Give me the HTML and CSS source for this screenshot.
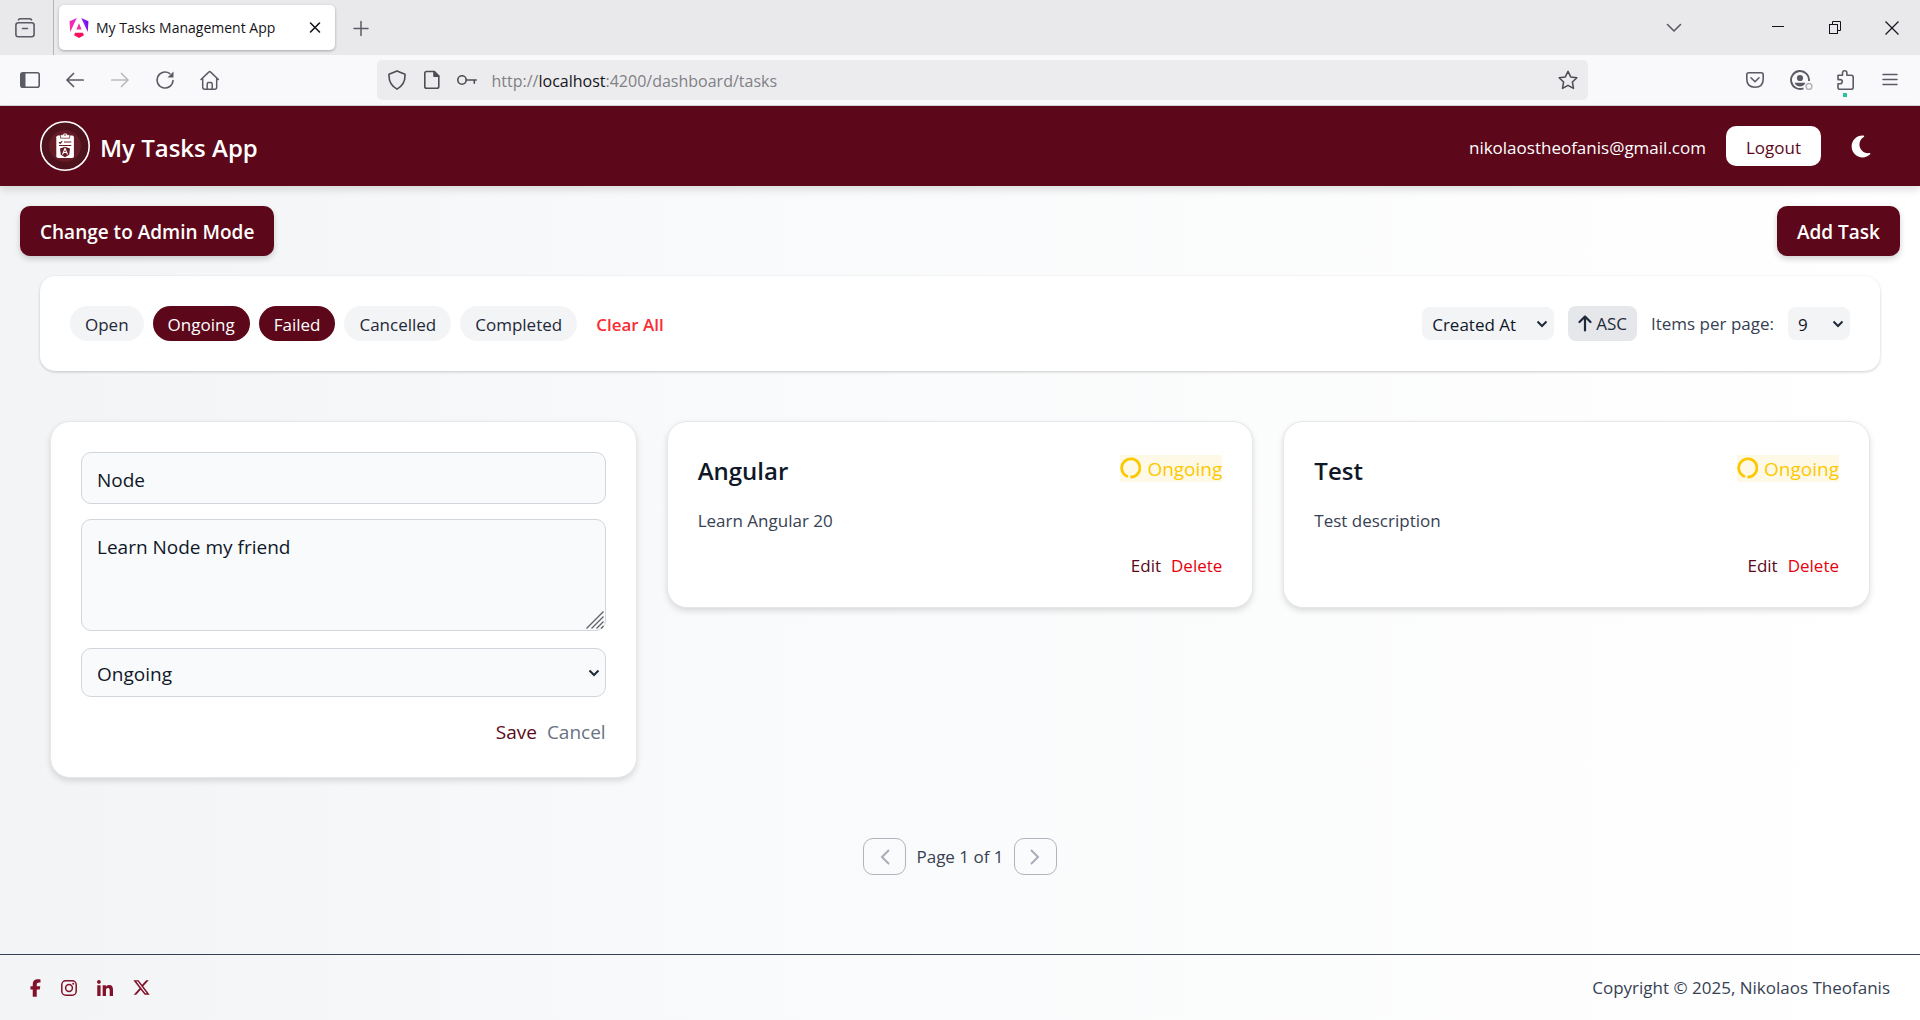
FILE: index.html
```html
<!DOCTYPE html>
<html lang="en">
<head>
<meta charset="utf-8">
<meta name="viewport" content="width=device-width, initial-scale=1">
<title>My Tasks Management App</title>
<link rel="stylesheet" href="styles.css">
</head>
<body>
<div class="browser">
  <div class="tabstrip">
    <button class="icon-btn tabs-menu" aria-label="Recent browsing">
      <svg width="20" height="20" viewBox="0 0 20 20" fill="none" stroke="#5b5b66" stroke-width="1.6" stroke-linecap="round"><path d="M3.5 1.8Q4 .8 5.500.8H14.500Q16 .8 16.500 1.800"/><rect x=".9" y="4.800" width="18.200" height="14" rx="2.500"/><path d="M7.500 10.500h5"/></svg>
    </button>
    <div class="tab">
      <svg width="20" height="20" viewBox="0 0 24 24"><defs><linearGradient id="ng" gradientUnits="userSpaceOnUse" x1="1" y1="14" x2="23" y2="6"><stop offset="0" stop-color="#ff2a90"/><stop offset=".4" stop-color="#e62ad8"/><stop offset="1" stop-color="#6a10f0"/></linearGradient></defs><path fill="url(#ng)" d="M14.692 0l7.832 16.855.814-12.856L14.692 0ZM9.308 0 .662 3.999l.814 12.856L9.308 0Z"/><path fill="#f0309c" d="M8.903 13.930h6.198L12 6.396Z"/><path fill="#f80f5c" d="M16.712 17.711H7.288l-1.204 2.916L12 24l5.916-3.373-1.204-2.916Z"/></svg>
      <span class="tab-title">My Tasks Management App</span>
      <button class="icon-btn" aria-label="Close tab"><svg width="20" height="20" viewBox="0 0 20 20" stroke="#15141a" stroke-width="1.600" stroke-linecap="round"><path d="m5.500 5 9 9m0-9-9 9"/></svg></button>
    </div>
    <button class="icon-btn new-tab" aria-label="New tab"><svg width="20" height="20" viewBox="0 0 20 20" stroke="#5b5b66" stroke-width="1.500" stroke-linecap="round"><path d="M3 10.500h14M10 3.500v14"/></svg></button>
    <div class="window-controls">
      <button class="icon-btn list-tabs" aria-label="List all tabs"><svg width="20" height="20" viewBox="0 0 20 20" fill="none" stroke="#5b5b66" stroke-width="1.600" stroke-linecap="round" stroke-linejoin="round"><path d="m3.500 6.500 6.500 6.500 6.500-6.500"/></svg></button>
      <button class="icon-btn" aria-label="Minimize"><svg width="20" height="20" viewBox="0 0 20 20" stroke="#15141a"><path d="M4 8.500h12"/></svg></button>
      <button class="icon-btn" aria-label="Restore"><svg width="20" height="20" viewBox="0 0 20 20" fill="none" stroke="#15141a"><rect x="4.500" y="6.500" width="8" height="9"/><path d="M7.500 6.500v-3h8v9h-3"/></svg></button>
      <button class="icon-btn" aria-label="Close"><svg width="20" height="20" viewBox="0 0 20 20" stroke="#15141a" stroke-width="1.200"><path d="m3.500 3.500 13 13m0-13-13 13"/></svg></button>
    </div>
  </div>
  <div class="toolbar">
    <button class="icon-btn" aria-label="Sidebar"><svg width="20" height="20" viewBox="0 0 20 20"><rect x=".8" y="2.800" width="18.400" height="14.400" rx="2" fill="none" stroke="#5b5b66" stroke-width="1.600"/><path d="M1 4q0-1 1-1h3.500v14H2q-1 0-1-1z" fill="#5b5b66"/></svg></button>
    <button class="icon-btn" aria-label="Back"><svg width="20" height="20" viewBox="0 0 20 20" fill="none" stroke="#5b5b66" stroke-width="1.700" stroke-linecap="round" stroke-linejoin="round"><path d="M18.200 10H2M8.500 3.500 2 10l6.500 6.500"/></svg></button>
    <button class="icon-btn" aria-label="Forward" disabled><svg width="20" height="20" viewBox="0 0 20 20" fill="none" stroke="#bbbbc0" stroke-width="1.700" stroke-linecap="round" stroke-linejoin="round"><path d="M1.800 10H18M11.500 3.500 18 10l-6.500 6.500"/></svg></button>
    <button class="icon-btn" aria-label="Reload"><svg width="20" height="20" viewBox="0 0 20 20" fill="none" stroke="#5b5b66" stroke-width="1.600" stroke-linecap="round"><path d="M18 10.500A8 8 0 1 1 14.800 3.600"/><path d="M18.500 1.500v6h-6z" fill="#5b5b66" stroke="none"/></svg></button>
    <button class="icon-btn" aria-label="Home"><svg width="20" height="20" viewBox="0 0 20 20" fill="none" stroke="#5b5b66" stroke-width="1.500" stroke-linecap="round" stroke-linejoin="round"><path d="m1 9.500 8-7.600q.700-.700 1.400 0l8 7.600M2.700 8.500v8.700q0 2 2 2h10q2 0 2-2V8.500M7.200 19v-5q0-1.500 1.500-1.500h2q1.500 0 1.500 1.500v5"/></svg></button>
    <span class="spacer"></span>
    <div class="urlbar">
      <svg width="20" height="20" viewBox="0 0 20 20" fill="none" stroke="#4d4d55" stroke-width="1.600" stroke-linejoin="round"><path d="M10 .9 18 4.200q.600 10.300-8 14.900Q1.400 14.500 2 4.200Z"/></svg>
      <svg width="20" height="20" viewBox="0 0 20 20" fill="none" stroke="#4d4d55" stroke-width="1.600" stroke-linejoin="round"><path d="M4 1.500h8.300l4.500 4.500v10.500q0 1.800-1.800 1.800H4.600q-1.800 0-1.800-1.800V3.300q0-1.800 1.800-1.800"/><path d="M12 1.500v4.700h4.800z" fill="#4d4d55"/></svg>
      <svg width="20" height="20" viewBox="0 0 20 20" fill="none" stroke="#4d4d55" stroke-width="1.600" stroke-linecap="round"><circle cx="5" cy="10" r="4.200"/><path d="M9.300 10H19.200M17.300 10v3.300"/></svg>
      <span class="url">http://<b class="host">localhost</b>:4200/dashboard/tasks</span>
      <svg width="20" height="20" viewBox="0 0 20 20" fill="none" stroke="#4d4d55" stroke-width="1.500" stroke-linejoin="round"><path d="m10 1.300 2.700 5.600 6.200.8-4.500 4.300 1.100 6.400L10 15.300l-5.500 3.100L5.600 12 1.100 7.700l6.200-.8Z"/></svg>
    </div>
    <span class="spacer"></span>
    <button class="icon-btn" aria-label="Save to Pocket"><svg width="20" height="20" viewBox="0 0 20 20" fill="none" stroke="#5b5b66" stroke-width="1.600" stroke-linecap="round" stroke-linejoin="round"><path d="M3.800 2.800h12.400q2 0 2 2V9q0 8.200-8.200 8.200T1.800 9V4.800q0-2 2-2Z"/><path d="m6 7.800 4 3.900 4-3.900"/></svg></button>
    <button class="icon-btn" aria-label="Account"><svg class="account" width="24" height="20" viewBox="0 0 24 20" fill="none"><path d="M19 11A9 9 0 1 0 13.500 18.300" stroke="#5b5b66" stroke-width="1.900"/><circle cx="10" cy="8" r="3.100" fill="#5b5b66"/><path d="M4.700 12.800h10.600q-1.300 3.800-5.300 3.800t-5.300-3.800" fill="#5b5b66"/><circle cx="19" cy="16.500" r="2.900" stroke="#b4b4ba" stroke-width="1.500"/></svg></button>
    <button class="icon-btn extensions" aria-label="Extensions"><svg width="20" height="20" viewBox="0 0 20 20" fill="none" stroke="#5b5b66" stroke-width="1.600" stroke-linejoin="round"><path d="M3 5.200h4.500V3a2.200 2.200 0 0 1 4.400 0v2.200h4.300q2 0 2 2v10q0 2-2 2H4.800q-1.800 0-1.800-2v-3.400h2.200a2.100 2.100 0 0 0 0-4.200H3Z"/></svg><span class="dot"></span></button>
    <button class="icon-btn" aria-label="Menu"><svg width="20" height="20" viewBox="0 0 20 20" stroke="#5b5b66" stroke-width="1.500" stroke-linecap="round"><path d="M3 4.500h14M3 9.500h14M3 14.500h14"/></svg></button>
  </div>
</div>

<header class="site-header">
  <a class="brand" href="#">
    <svg width="50" height="50" viewBox="0 0 50 50"><circle cx="25" cy="25" r="24.200" fill="#4d121b" stroke="#fff" stroke-width="1.600"/><circle cx="25" cy="25" r="16" fill="#661c26"/><rect x="16.300" y="14.500" width="17.600" height="22.500" rx="1.800" fill="#fff"/><path d="M20.500 17.200v-2.700q0-.8.8-.8h1.500a2.400 2.400 0 0 1 4.600 0h1.500q.8 0 .8.800v2.700z" fill="#fff" stroke="#661c26" stroke-width=".7"/><circle cx="25" cy="14" r=".8" fill="#661c26"/><path d="m19 21.200 1.200 1.200 2-2.200M24 21h7.300M19 24.500h12.300" fill="none" stroke="#661c26" stroke-width="1.100"/><path d="m25 25.800 5 1.700-.8 6.300-4.200 2.500-4.200-2.500-.8-6.300z" fill="#661c26"/><path d="m22.500 33.500 2.500-6 2.500 6M23.500 31.500h3" fill="none" stroke="#fff" stroke-width="1.100"/></svg>
    <span>My Tasks App</span>
  </a>
  <div class="account-bar">
    <span>nikolaostheofanis@gmail.com</span>
    <button class="logout">Logout</button>
    <button class="icon-btn theme" aria-label="Dark mode"><svg width="20" height="25" viewBox="0 0 384 512" fill="#fff"><path d="M223.500 32C100 32 0 132.300 0 256S100 480 223.500 480c60.600 0 115.500-24.200 155.800-63.400c5-4.900 6.300-12.500 3.100-18.700s-10.100-9.700-17-8.500c-9.800 1.700-19.800 2.600-30.100 2.600c-96.900 0-175.500-78.800-175.500-176c0-65.800 36-123.100 89.300-153.300c6.100-3.500 9.200-10.500 7.700-17.300s-7.300-11.900-14.300-12.500c-6.300-.5-12.600-.8-19-.8z"/></svg></button>
  </div>
</header>

<main class="main">
  <div class="actions-row">
    <button class="primary">Change to Admin Mode</button>
    <button class="primary">Add Task</button>
  </div>

  <section class="filters" aria-label="Filters">
    <div class="chips">
      <button class="chip">Open</button>
      <button class="chip active">Ongoing</button>
      <button class="chip active">Failed</button>
      <button class="chip">Cancelled</button>
      <button class="chip">Completed</button>
      <button class="clear">Clear All</button>
    </div>
    <div class="sorting">
      <span class="select sort-by"><select aria-label="Sort by"><option>Created At</option></select><svg class="caret" width="12" height="8" viewBox="0 0 12 8"><path d="m1.500 1.500 4.500 4.500 4.500-4.500"/></svg></span>
      <button class="direction"><svg width="14" height="17" viewBox="0 0 14 17" fill="none" stroke="#1e2939" stroke-width="2.200" stroke-linecap="round" stroke-linejoin="round"><path d="M7 15.500v-14M1.500 7 7 1.500 12.500 7"/></svg><span>ASC</span></button>
      <label for="per-page">Items per page:</label>
      <span class="select per-page"><select id="per-page"><option>9</option></select><svg class="caret" width="12" height="8" viewBox="0 0 12 8"><path d="m1.500 1.500 4.500 4.500 4.500-4.500"/></svg></span>
    </div>
  </section>

  <section class="tasks" aria-label="Tasks">
    <form class="card edit-card">
      <input class="field" type="text" value="Node" aria-label="Title">
      <div class="area">
        <textarea class="field" aria-label="Description">Learn Node my friend</textarea>
        <svg class="grip" width="18" height="18" viewBox="0 0 18 18" stroke="#5f6368" stroke-width="1.300"><path d="M.5 17.500 17.500.5M5.500 17.500l12-12M10.500 17.500l7-7M15 17.500l2.500-2.500"/></svg>
      </div>
      <span class="select status"><select class="field" aria-label="Status"><option>Ongoing</option></select><svg class="caret" width="12" height="8" viewBox="0 0 12 8"><path d="m1.500 1.500 4.500 4.500 4.500-4.500"/></svg></span>
      <div class="form-actions">
        <button type="button" class="text-btn save">Save</button>
        <button type="button" class="text-btn cancel">Cancel</button>
      </div>
    </form>

    <article class="card">
      <div class="card-head">
        <h2>Angular</h2>
        <span class="badge"><svg width="21" height="22" viewBox="0 0 21 22" fill="none" stroke="#fcc800" stroke-width="2.800" stroke-linecap="round"><path d="M7 19.200A9.100 9.100 0 1 1 11.500 20"/></svg>Ongoing</span>
      </div>
      <p>Learn Angular 20</p>
      <div class="card-actions"><button class="text-btn edit">Edit</button><button class="text-btn delete">Delete</button></div>
    </article>

    <article class="card">
      <div class="card-head">
        <h2>Test</h2>
        <span class="badge"><svg width="21" height="22" viewBox="0 0 21 22" fill="none" stroke="#fcc800" stroke-width="2.800" stroke-linecap="round"><path d="M7 19.200A9.100 9.100 0 1 1 11.500 20"/></svg>Ongoing</span>
      </div>
      <p>Test description</p>
      <div class="card-actions"><button class="text-btn edit">Edit</button><button class="text-btn delete">Delete</button></div>
    </article>
  </section>

  <nav class="pager" aria-label="Pagination">
    <button class="page-btn" aria-label="Previous page" disabled><svg width="10" height="16" viewBox="0 0 10 16"><path d="M8.500 1.500 2 8l6.500 6.500"/></svg></button>
    <span>Page 1 of 1</span>
    <button class="page-btn" aria-label="Next page" disabled><svg width="10" height="16" viewBox="0 0 10 16"><path d="M1.500 1.500 8 8l-6.500 6.500"/></svg></button>
  </nav>
</main>

<footer class="site-footer">
  <div class="social">
    <a href="#" aria-label="Facebook"><svg width="11" height="18" viewBox="0 0 320 512"><path d="M80 299.300V512H196V299.300h86.500l18-97.800H196V166.900c0-51.700 20.300-71.500 72.700-71.500c16.300 0 29.400 .4 37 1.200V7.900C291.400 4 256.400 0 236.200 0C129.300 0 80 50.500 80 159.400v42.100H14v97.800H80z"/></svg></a>
    <a href="#" aria-label="Instagram"><svg width="16" height="16" viewBox="0 0 16 16"><rect x=".8" y=".8" width="14.400" height="14.400" rx="4" fill="none" stroke="#82112a" stroke-width="1.500"/><circle cx="8" cy="8" r="3.400" fill="none" stroke="#82112a" stroke-width="1.500"/><circle cx="12.200" cy="3.800" r="1"/></svg></a>
    <a href="#" aria-label="LinkedIn"><svg width="16" height="16" viewBox="0 0 448 448"><path d="M100.280 448H7.400V148.900h92.880zM53.790 108.100C24.090 108.100 0 83.500 0 53.800a53.790 53.790 0 0 1 107.580 0c0 29.700-24.100 54.300-53.790 54.300zM447.900 448h-92.680V302.400c0-34.700-.7-79.200-48.290-79.200-48.290 0-55.690 37.700-55.690 76.700V448h-92.780V148.900h89.080v40.800h1.300c12.400-23.500 42.690-48.300 87.880-48.300 94 0 111.280 61.900 111.280 142.300V448z"/></svg></a>
    <a href="#" aria-label="X"><svg width="17" height="17" viewBox="16 16 480 480"><path d="M389.200 48h70.600L305.600 224.200 487 464H345L233.700 318.600 106.500 464H35.800L200.700 275.500 26.800 48H172.400L272.900 180.900 389.200 48zM364.400 421.800h39.100L151.100 88h-42L364.400 421.800z"/></svg></a>
  </div>
  <span>Copyright © 2025, Nikolaos Theofanis</span>
</footer>
</body>
</html>
```
FILE: styles.css
```css
* { box-sizing: border-box; }

body {
  margin: 0;
  min-height: 100vh;
  display: flex;
  flex-direction: column;
  font: 17px/25px "Open Sans", "Noto Sans", sans-serif;
  color: #364153;
  background: linear-gradient(to right, #f3f4f6, #f9fafb 40%, #ffffff);
}

button, input, select, textarea { font: inherit; color: inherit; }
button { border: 0; padding: 0; background: none; white-space: nowrap; }
svg { display: block; flex: none; }
.icon-btn { display: flex; align-items: center; justify-content: center; width: 20px; height: 20px; }

/* Browser window */
.tabstrip { display: flex; height: 55px; background: #e9e9eb; align-items: center; }
.tabs-menu { width: 54px; height: 55px; padding-right: 3px; border-right: 1px solid #b3b3b8; }
.tab {
  display: flex; align-items: center; gap: 7px;
  width: 276px; height: 45px; margin-left: 5px; padding: 0 10px;
  background: #fff; border-radius: 5px; box-shadow: 0 1px 3px rgba(0, 0, 0, .3);
  color: #15141a; font-size: 14px; line-height: 20px;
}
.tab-title { flex: 1; white-space: nowrap; }
.new-tab { margin-left: 16px; }
.window-controls { display: flex; gap: 37px; margin-left: auto; padding-right: 18px; }
.list-tabs { margin-right: 47px; }

.toolbar {
  display: flex; align-items: center; gap: 25px;
  height: 51px; padding: 0 20px;
  background: #f9f9fb; border-bottom: 1px solid #d4d4d8;
}
.spacer { flex: 13; margin: 0 -25px; }
.urlbar {
  flex: 99; display: flex; align-items: center; gap: 15px;
  height: 40px; padding: 0 10px; background: #ececee; border-radius: 5px;
}
.url { flex: 1; padding-top: 2px; font-size: 16px; color: #808085; }
.host { font-weight: 400; color: #15141a; }
.account { margin-right: -4px; }
.extensions { position: relative; }
.dot { position: absolute; left: 8px; top: 23px; width: 4px; height: 4px; background: #2ac3a2; }

/* Header */
.site-header {
  display: flex; justify-content: space-between; align-items: center;
  height: 80px; padding: 0 49px 0 40px;
  background: #5c081a; color: #fff; box-shadow: 0 4px 8px rgba(0, 0, 0, .12);
}
.brand {
  display: flex; align-items: center; gap: 10px;
  color: #fff; text-decoration: none; font-size: 24px; line-height: 35px; font-weight: 600;
}
.brand span, .account-bar span { padding-top: 2px; }
.account-bar { display: flex; align-items: center; gap: 20px; }
.logout { height: 40px; padding: 2px 20px 0; background: #fff; color: #5c081a; border-radius: 10px; }
.theme { margin-left: 10px; }

/* Main */
.main { flex: 1; padding: 20px; }
.actions-row { display: flex; justify-content: space-between; }
.primary {
  height: 50px; padding: 2px 20px 0;
  background: #5c081a; color: #fff; font-size: 19px; font-weight: 600;
  border-radius: 10px; box-shadow: 0 3px 6px rgba(0, 0, 0, .18);
}
.filters {
  display: flex; justify-content: space-between; align-items: center;
  margin: 20px 20px 0; padding: 30px; background: #fff;
  border-radius: 15px; box-shadow: 0 1px 3px rgba(0, 0, 0, .2);
}
.chips { display: flex; gap: 9px; }
.chip { height: 35px; padding: 1px 15px 0; border-radius: 18px; background: #f3f4f6; color: #1e2939; }
.chip.active { background: #5c081a; color: #fff; }
.clear { padding: 1px 10px 0; color: #fb2c36; font-weight: 600; }
.sorting { display: flex; align-items: center; gap: 14px; }

.select { display: block; position: relative; color: #101828; }
.select select {
  appearance: none; display: block; width: 100%; height: 33px; padding: 1px 10px 0;
  border: 0; border-radius: 8px; background: #f3f4f6;
}
.caret {
  position: absolute; right: 6px; top: calc(50% - 4px);
  fill: none; stroke: #1e2939; stroke-width: 2; pointer-events: none;
}
.sort-by { width: 132px; }
.per-page { width: 62px; }
.direction {
  display: flex; align-items: center; gap: 4px;
  height: 35px; padding: 0 10px; border-radius: 8px; background: #e5e7eb; color: #1e2939;
}

/* Cards */
.tasks {
  display: grid; grid-template-columns: repeat(3, 1fr); gap: 30px;
  align-items: start; margin: 50px 30px 60px;
}
.card {
  display: flex; flex-direction: column; gap: 20px;
  padding: 31px 30px 29px; background: #fff; border: 1px solid #e5e7eb;
  border-radius: 20px; box-shadow: 0 3px 6px rgba(0, 0, 0, .13);
}
.card h2, .card p { margin: 0; }
.card h2 { font-size: 24px; line-height: 35px; font-weight: 600; color: #101828; }
.card-head { display: flex; justify-content: space-between; align-items: flex-start; }
.badge {
  display: flex; align-items: flex-start; gap: 6px; margin-top: 2px; padding-top: 2px;
  font-size: 19px; line-height: 25px; color: #fcc800; background: #fef9e6;
}
.card-actions, .form-actions { display: flex; justify-content: flex-end; gap: 10px; }
.edit, .save { color: #5c081a; }
.delete { color: #e7000b; }
.cancel { color: #6a7282; }

.edit-card { gap: 15px; padding: 30px; font-size: 19px; line-height: 30px; }
.field {
  display: block; width: 100%; height: 52px; padding: 12px 15px 8px;
  background: #f9fafb; color: #101828; border: 1px solid #d1d5dc; border-radius: 10px;
}
.area { position: relative; margin-bottom: 2px; }
textarea.field { height: 112px; resize: none; }
.grip { position: absolute; right: 2px; bottom: 2px; }
.select select.field {
  height: 49px; padding: 2px 15px 0;
  background: #f9fafb; border: 1px solid #d1d5dc; border-radius: 10px;
}
.form-actions { padding-top: 5px; }

.pager { display: flex; justify-content: center; align-items: center; gap: 10px; }
.page-btn {
  display: flex; align-items: center; justify-content: center;
  width: 43px; height: 37px; border: 1px solid #b0b4bd; border-radius: 10px;
}
.page-btn svg { fill: none; stroke: #a9adb7; stroke-width: 2; stroke-linecap: round; }

/* Footer */
.site-footer {
  display: flex; justify-content: space-between; align-items: center;
  height: 66px; padding: 0 30px; border-top: 1px solid #364153;
}
.social { display: flex; align-items: center; gap: 20px; fill: #82112a; }
```
